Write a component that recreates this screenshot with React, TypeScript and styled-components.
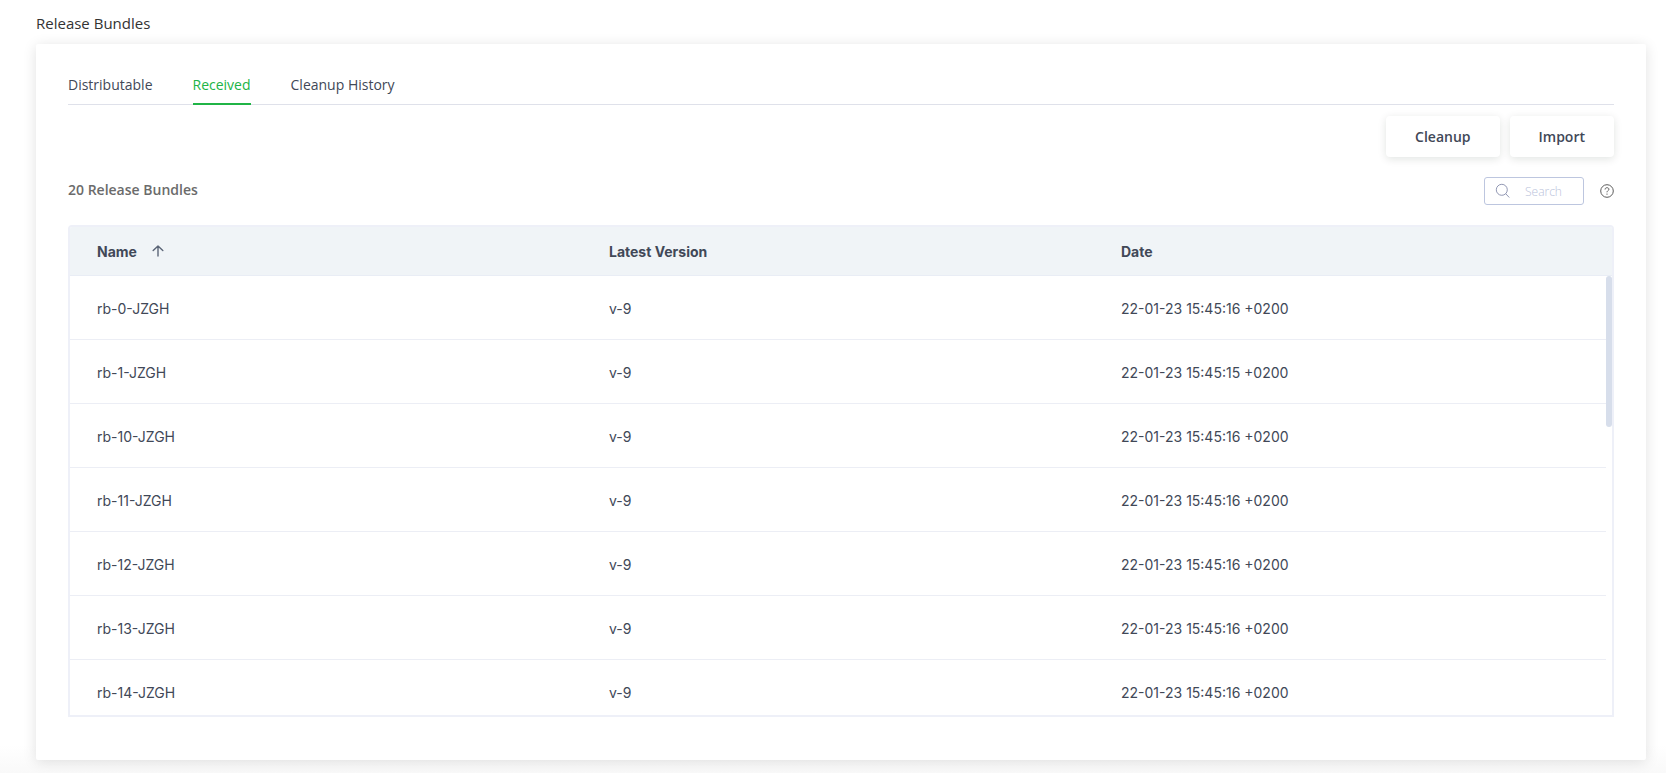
import React, { useState } from "react";
import styled, { createGlobalStyle } from "styled-components";

const GlobalStyle = createGlobalStyle`
  *, *::before, *::after { box-sizing: border-box; }
  body {
    margin: 0;
    background: #fff;
    font-family: "Open Sans", sans-serif;
    font-size: 14px;
    color: #414857;
  }
  button, input { font: inherit; color: inherit; }
`;

const Page = styled.main`
  min-height: 100vh;
  padding: 11px 20px 13px 36px;
  background: linear-gradient(to top, #f9f9f9, #fff 28px);
`;

const Title = styled.h1`
  margin: 0 0 9px;
  font-size: 15px;
  line-height: 24px;
  font-weight: 400;
  color: #333;
`;

const Card = styled.section`
  padding: 24px 32px 43px;
  background: #fff;
  border-radius: 2px;
  box-shadow: 0 2px 14px rgba(0, 0, 0, 0.12);
`;

const Tabs = styled.nav`
  display: flex;
  gap: 40px;
  border-bottom: 1px solid #dfe1ea;
`;

const Tab = styled.button<{ $active: boolean }>`
  height: 37px;
  margin-bottom: -1px;
  padding: 0 0 2px;
  border: 0;
  border-bottom: 2px solid ${(p) => (p.$active ? "#20b446" : "transparent")};
  background: none;
  color: ${(p) => (p.$active ? "#20b446" : "#414857")};
  cursor: pointer;
`;

const Actions = styled.div`
  display: flex;
  justify-content: flex-end;
  gap: 10px;
  padding: 11px 0 20px;
`;

const ActionButton = styled.button`
  height: 41px;
  padding: 0 29px;
  border: 0;
  border-radius: 4px;
  background: #fff;
  box-shadow: 0 2px 8px rgba(0, 30, 20, 0.12);
  font-weight: 600;
  cursor: pointer;
`;

const Toolbar = styled.div`
  display: flex;
  align-items: center;
  gap: 16px;
  margin-bottom: 20px;
`;

const Count = styled.h2`
  flex: 1;
  margin: 0;
  padding-bottom: 2px;
  font-size: 14px;
  line-height: 24px;
  font-weight: 600;
  color: #6b6b6b;
`;

const SearchBox = styled.label`
  display: flex;
  align-items: center;
  gap: 14px;
  width: 100px;
  height: 28px;
  padding: 0 10px;
  border: 1px solid #bdc6df;
  border-radius: 3px;
`;

const SearchInput = styled.input`
  flex: 1;
  min-width: 0;
  padding: 0;
  border: 0;
  outline: 0;
  background: none;
  font-size: 12px;
  &::placeholder { color: #b9c2da; opacity: 1; font-weight: 300; }
`;

const HelpButton = styled.button`
  display: flex;
  padding: 0;
  border: 0;
  background: none;
  cursor: pointer;
`;

const Frame = styled.div`
  display: flex;
  max-height: 492px;
  overflow: hidden;
  border: 2px solid #eef0f8;
  border-radius: 4px 4px 0 0;
  font-family: Inter, sans-serif;
`;

const Table = styled.table`
  flex: 1;
  width: 100%;
  min-width: 0;
  border-collapse: separate;
  border-spacing: 0;
  table-layout: fixed;
  text-align: left;
`;

const HeadCell = styled.th`
  height: 49px;
  padding: 0 27px;
  border-bottom: 1px solid #e9edf5;
  background: #f0f4f7;
  font-weight: 700;
`;

const SortButton = styled.button`
  display: inline-flex;
  align-items: center;
  gap: 15px;
  padding: 0;
  border: 0;
  background: none;
  cursor: pointer;
`;

const Cell = styled.td`
  height: 64px;
  padding: 1px 27px 0;
  border-bottom: 1px solid #eceef5;
`;

const ScrollColumn = styled.div`
  flex: 0 0 6px;
`;

const ScrollHead = styled.div`
  height: 49px;
  border-bottom: 1px solid #e9edf5;
  background: #f0f4f7;
`;

const ScrollThumb = styled.div`
  height: 151px;
  border-radius: 3px;
  background: #d7deeb;
`;

const tabs = ["Distributable", "Received", "Cleanup History"];

const bundles = [
  { name: "rb-0-JZGH", version: "v-9", date: "22-01-23 15:45:16 +0200" },
  { name: "rb-1-JZGH", version: "v-9", date: "22-01-23 15:45:15 +0200" },
  { name: "rb-10-JZGH", version: "v-9", date: "22-01-23 15:45:16 +0200" },
  { name: "rb-11-JZGH", version: "v-9", date: "22-01-23 15:45:16 +0200" },
  { name: "rb-12-JZGH", version: "v-9", date: "22-01-23 15:45:16 +0200" },
  { name: "rb-13-JZGH", version: "v-9", date: "22-01-23 15:45:16 +0200" },
  { name: "rb-14-JZGH", version: "v-9", date: "22-01-23 15:45:16 +0200" },
];

const SearchIcon = () => (
  <svg width="16" height="16" viewBox="0 0 16 16" fill="none" stroke="#9298b4" aria-hidden="true">
    <circle cx="6.8" cy="6.8" r="5.5" />
    <path d="M10.8 10.8 14 14.200" strokeLinecap="round" />
  </svg>
);

const HelpIcon = () => (
  <svg width="14" height="14" viewBox="0 0 14 14" fill="none" stroke="#5c5c5c" aria-hidden="true">
    <circle cx="7" cy="7" r="6.3" />
    <path d="M5.1 5.500C5.100 4.300 5.900 3.700 7 3.700s1.900.6 1.900 1.600C8.900 6.500 7 6.700 7 8.300" />
    <circle cx="7" cy="10.100" r=".7" fill="#5c5c5c" stroke="none" />
  </svg>
);

const ArrowUpIcon = () => (
  <svg width="12" height="12" viewBox="0 0 12 12" fill="none" stroke="#5b6577" strokeWidth="1.400" strokeLinecap="round" strokeLinejoin="round" aria-hidden="true">
    <path d="M6 11V1M1.200 5.600 6 1l4.800 4.600" />
  </svg>
);

export default function App() {
  const [active, setActive] = useState("Received");
  return (
    <>
      <GlobalStyle />
      <Page>
        <Title>Release Bundles</Title>
        <Card>
          <Tabs>
            {tabs.map((tab) => (
              <Tab key={tab} $active={tab === active} onClick={() => setActive(tab)}>
                {tab}
              </Tab>
            ))}
          </Tabs>
          <Actions>
            <ActionButton>Cleanup</ActionButton>
            <ActionButton>Import</ActionButton>
          </Actions>
          <Toolbar>
            <Count>20 Release Bundles</Count>
            <SearchBox>
              <SearchIcon />
              <SearchInput type="text" placeholder="Search" aria-label="Search" />
            </SearchBox>
            <HelpButton aria-label="Help">
              <HelpIcon />
            </HelpButton>
          </Toolbar>
          <Frame>
            <Table>
              <thead>
                <tr>
                  <HeadCell scope="col" aria-sort="ascending">
                    <SortButton>
                      Name
                      <ArrowUpIcon />
                    </SortButton>
                  </HeadCell>
                  <HeadCell scope="col">Latest Version</HeadCell>
                  <HeadCell scope="col">Date</HeadCell>
                </tr>
              </thead>
              <tbody>
                {bundles.map((bundle) => (
                  <tr key={bundle.name}>
                    <Cell>{bundle.name}</Cell>
                    <Cell>{bundle.version}</Cell>
                    <Cell>{bundle.date}</Cell>
                  </tr>
                ))}
              </tbody>
            </Table>
            <ScrollColumn>
              <ScrollHead />
              <ScrollThumb />
            </ScrollColumn>
          </Frame>
        </Card>
      </Page>
    </>
  );
}
